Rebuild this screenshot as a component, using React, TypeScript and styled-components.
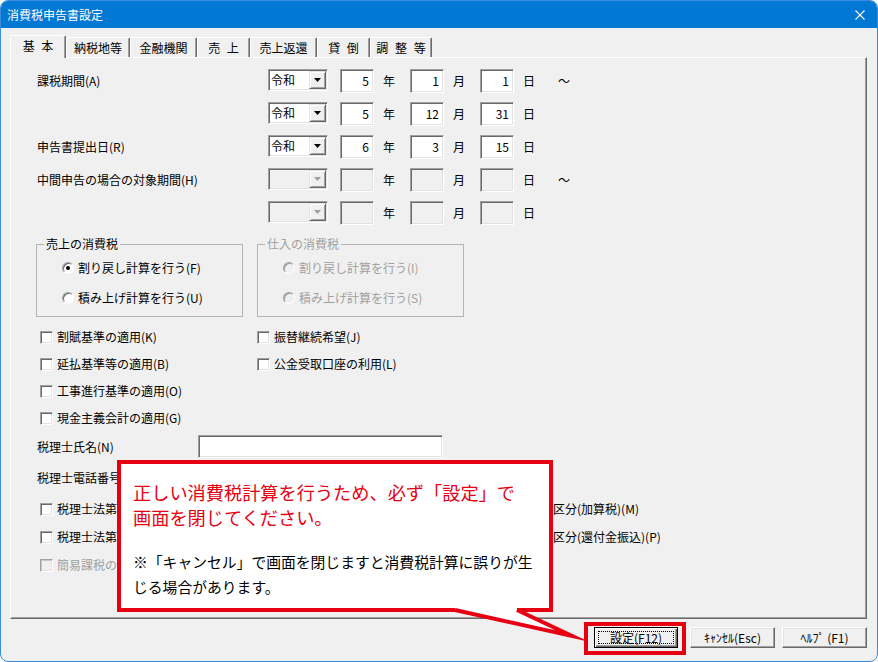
import React from "react";
import styled, { createGlobalStyle } from "styled-components";

const GlobalStyle = createGlobalStyle`
  html, body { margin: 0; padding: 0; background: #ffffff; }
  body {
    font-family: "Noto Sans CJK JP", "Noto Sans", sans-serif;
    font-size: 12px;
    color: #000;
  }
  * { box-sizing: border-box; }
`;

const RED = "#e60012";
const DIS = "#a0a0a0";

const Window = styled.div`
  position: relative;
  width: 878px;
  height: 662px;
  border: 1px solid #3a8ddb;
  border-radius: 8px;
  overflow: hidden;
  background: #f0f0f0;
  display: flex;
  flex-direction: column;
`;

const TitleBar = styled.div`
  height: 27px;
  flex: none;
  background: #0078d4;
  color: #fff;
  display: flex;
  align-items: center;
  justify-content: space-between;
  padding: 0 12px 0 6px;
  font-size: 12px;
  line-height: 16px;
`;

const Body = styled.div`
  flex: 1;
  padding: 7px 10px 0 9px;
  display: flex;
  flex-direction: column;
`;

const TabStrip = styled.div`
  position: relative;
  z-index: 1;
  height: 22px;
  display: flex;
  align-items: flex-end;
`;

const Tab = styled.div<{ $w: number; $active?: boolean }>`
  width: ${(p) => p.$w}px;
  height: ${(p) => (p.$active ? 23 : 20)}px;
  margin-bottom: ${(p) => (p.$active ? -1 : 0)}px;
  flex: none;
  display: flex;
  align-items: center;
  justify-content: center;
  padding-bottom: ${(p) => (p.$active ? 2 : 0)}px;
  background: #f0f0f0;
  border-top: 1px solid #fff;
  border-left: 1px solid #fff;
  border-right: 1px solid #696969;
  box-shadow: inset -1px 0 0 #a0a0a0;
  border-radius: 2px 2px 0 0;
  font-size: 12px;
  line-height: 16px;
  word-spacing: 4px;
  white-space: pre;
`;

const Panel = styled.div`
  height: 562px;
  flex: none;
  border-top: 1px solid #fff;
  border-left: 1px solid #fff;
  border-right: 1px solid #696969;
  border-bottom: 1px solid #696969;
  box-shadow: inset -1px -1px 0 #a0a0a0;
  padding: 11px 0 0 26px;
  display: flex;
  flex-direction: column;
`;

const DateGrid = styled.div`
  display: flex;
  flex-direction: column;
  gap: 9px;
`;

const DateRow = styled.div`
  display: flex;
  align-items: flex-start;
  height: 24px;
`;

const FieldLabel = styled.div<{ $w: number }>`
  width: ${(p) => p.$w}px;
  flex: none;
  line-height: 24px;
  white-space: nowrap;
`;

const Sunken = styled.div<{ $disabled?: boolean }>`
  flex: none;
  background: ${(p) => (p.$disabled ? "#f0f0f0" : "#fff")};
  border: 1px solid;
  border-color: #a0a0a0 #fff #fff #a0a0a0;
  box-shadow: inset 1px 1px 0 #696969, inset -1px -1px 0 #e3e3e3;
`;

const Combo = styled(Sunken)`
  width: 60px;
  height: 22px;
  margin-right: 12px;
  padding: 1px 1px 1px 2px;
  display: flex;
  align-items: center;
  justify-content: space-between;
  line-height: 16px;
`;

const DropButton = styled.div<{ $disabled?: boolean }>`
  width: 17px;
  height: 18px;
  flex: none;
  background: #f0f0f0;
  border: 1px solid;
  border-color: #e3e3e3 #696969 #696969 #e3e3e3;
  box-shadow: inset 1px 1px 0 #fff, inset -1px -1px 0 #a0a0a0;
  display: flex;
  align-items: center;
  justify-content: center;
  color: ${(p) => (p.$disabled ? DIS : "#000")};
`;

const NumBox = styled(Sunken)`
  width: 34px;
  height: 24px;
  padding-right: 4px;
  text-align: right;
  line-height: 21px;
`;

const Unit = styled.div`
  width: 12px;
  flex: none;
  margin: 0 15px 0 9px;
  line-height: 24px;
`;

const Tilde = styled.div`
  margin-left: 8px;
  line-height: 24px;
`;

const GroupRow = styled.div`
  display: flex;
  gap: 14px;
  margin: 12px 0 0 -1px;
`;

const GroupBox = styled.fieldset<{ $disabled?: boolean }>`
  width: 207px;
  margin: 0;
  padding: 0 0 10px 7px;
  border: 1px solid #b4b4b4;
  color: ${(p) => (p.$disabled ? DIS : "#000")};
`;

const GroupLegend = styled.legend`
  padding: 0 2px;
  font-size: 12px;
  line-height: 14px;
`;

const RadioList = styled.div`
  display: flex;
  flex-direction: column;
  gap: 14px;
  padding: 9px 0 0 18px;
`;

const OptionItem = styled.label<{ $disabled?: boolean }>`
  display: flex;
  align-items: center;
  gap: 4px;
  height: 16px;
  line-height: 16px;
  white-space: nowrap;
  color: ${(p) => (p.$disabled ? DIS : "#000")};
`;

const RadioMark = styled.span<{ $checked?: boolean; $disabled?: boolean }>`
  position: relative;
  width: 12px;
  height: 12px;
  flex: none;
  border-radius: 50%;
  border: 1px solid;
  border-color: #a0a0a0 #fff #fff #a0a0a0;
  background: ${(p) => (p.$disabled ? "#f0f0f0" : "#fff")};
  box-shadow: inset 1px 1px 0 ${(p) => (p.$disabled ? "#a0a0a0" : "#696969")};
  &::after {
    content: "";
    display: ${(p) => (p.$checked ? "block" : "none")};
    position: absolute;
    left: 3px;
    top: 3px;
    width: 4px;
    height: 4px;
    border-radius: 50%;
    background: #000;
  }
`;

const CheckMark = styled.span<{ $disabled?: boolean }>`
  width: 13px;
  height: 13px;
  flex: none;
  border: 1px solid;
  border-color: #a0a0a0 #fff #fff #a0a0a0;
  background: ${(p) => (p.$disabled ? "#f0f0f0" : "#fff")};
  box-shadow: inset 1px 1px 0 ${(p) => (p.$disabled ? "#c8c8c8" : "#696969")},
    inset -1px -1px 0 #e3e3e3;
`;

const CheckGrid = styled.div<{ $cols: string; $mt: number; $gap: number }>`
  display: grid;
  grid-template-columns: ${(p) => p.$cols};
  grid-auto-rows: 16px;
  row-gap: ${(p) => p.$gap}px;
  margin: ${(p) => p.$mt}px 0 0 3px;
`;

const PlainText = styled.div`
  line-height: 16px;
  white-space: nowrap;
`;

const FormRow = styled.div<{ $mt: number }>`
  display: flex;
  align-items: center;
  height: 23px;
  margin-top: ${(p) => p.$mt}px;
`;

const TextField = styled(Sunken)<{ $w: number }>`
  width: ${(p) => p.$w}px;
  height: 23px;
`;

const ButtonRow = styled.div`
  display: flex;
  justify-content: flex-end;
  align-items: center;
  margin-top: 8px;
`;

const DialogButton = styled.button<{ $w: number; $mr: number }>`
  position: relative;
  width: ${(p) => p.$w}px;
  height: 21px;
  margin: 0 ${(p) => p.$mr}px 0 0;
  padding: 0;
  background: #f0f0f0;
  border: 1px solid;
  border-color: #fff #696969 #696969 #fff;
  box-shadow: inset -1px -1px 0 #a0a0a0, inset 1px 1px 0 #e3e3e3;
  font-family: inherit;
  font-size: 12px;
  line-height: 16px;
  color: #000;
`;

const DefaultButton = styled(DialogButton)`
  border: 1px solid #000;
  box-shadow: inset 1px 1px 0 #fff, inset -1px -1px 0 #696969,
    inset -2px -2px 0 #a0a0a0;
  &::before {
    content: "";
    position: absolute;
    inset: 3px;
    border: 1px dotted #000;
  }
  &::after {
    content: "";
    position: absolute;
    top: -6px;
    bottom: -8px;
    left: -11px;
    right: -9px;
    border: 4px solid ${RED};
  }
`;

const Callout = styled.div`
  position: absolute;
  left: 116px;
  top: 459px;
  width: 436px;
  height: 152px;
  background: #fff;
  border: 4px solid ${RED};
  padding: 16px 0 0 12px;
  white-space: nowrap;
`;

const CalloutHead = styled.div`
  color: ${RED};
  font-size: 18.2px;
  line-height: 25px;
`;

const CalloutNote = styled.div`
  margin-top: 19px;
  color: #000;
  font-size: 14.8px;
  line-height: 25px;
`;

const Tail = styled.svg`
  position: absolute;
  left: 439px;
  top: 599px;
  overflow: visible;
`;

const Arrow = () => (
  <svg width="7" height="4" viewBox="0 0 7 4">
    <path d="M0 0h7L3.5 4z" fill="currentColor" />
  </svg>
);

type DateSpec = {
  label: string;
  era?: string;
  y?: string;
  m?: string;
  d?: string;
  tilde?: boolean;
  disabled?: boolean;
};

const dateRows: DateSpec[] = [
  { label: "課税期間(A)", era: "令和", y: "5", m: "1", d: "1", tilde: true },
  { label: "", era: "令和", y: "5", m: "12", d: "31" },
  { label: "申告書提出日(R)", era: "令和", y: "6", m: "3", d: "15" },
  { label: "中間申告の場合の対象期間(H)", disabled: true, tilde: true },
  { label: "", disabled: true },
];

const tabs: { t: string; w: number }[] = [
  { t: "基 本", w: 56 },
  { t: "納税地等", w: 64 },
  { t: "金融機関", w: 67 },
  { t: "売 上", w: 53 },
  { t: "売上返還", w: 67 },
  { t: "貸 倒", w: 53 },
  { t: "調 整 等", w: 62 },
];

const Check = ({ text, disabled }: { text: string; disabled?: boolean }) => (
  <OptionItem $disabled={disabled}>
    <CheckMark $disabled={disabled} />
    {text}
  </OptionItem>
);

const Radio = ({
  text,
  checked,
  disabled,
}: {
  text: string;
  checked?: boolean;
  disabled?: boolean;
}) => (
  <OptionItem $disabled={disabled}>
    <RadioMark $checked={checked} $disabled={disabled} />
    {text}
  </OptionItem>
);

export default function App() {
  return (
    <>
      <GlobalStyle />
      <Window>
        <TitleBar>
          <span>消費税申告書設定</span>
          <svg width="10" height="10" viewBox="0 0 10 10">
            <path d="M0.5 0.5L9.5 9.5M9.5 0.5L0.5 9.5" stroke="#fff" strokeWidth="1.1" />
          </svg>
        </TitleBar>
        <Body>
          <TabStrip>
            {tabs.map((t, i) => (
              <Tab key={t.t} $w={t.w} $active={i === 0}>
                {t.t}
              </Tab>
            ))}
          </TabStrip>
          <Panel>
            <DateGrid>
              {dateRows.map((r, i) => (
                <DateRow key={i}>
                  <FieldLabel $w={231}>{r.label}</FieldLabel>
                  <Combo $disabled={r.disabled}>
                    <span>{r.era ?? ""}</span>
                    <DropButton $disabled={r.disabled}>
                      <Arrow />
                    </DropButton>
                  </Combo>
                  <NumBox $disabled={r.disabled}>{r.y ?? ""}</NumBox>
                  <Unit>年</Unit>
                  <NumBox $disabled={r.disabled}>{r.m ?? ""}</NumBox>
                  <Unit>月</Unit>
                  <NumBox $disabled={r.disabled}>{r.d ?? ""}</NumBox>
                  <Unit>日</Unit>
                  {r.tilde && <Tilde>～</Tilde>}
                </DateRow>
              ))}
            </DateGrid>

            <GroupRow>
              <GroupBox>
                <GroupLegend>売上の消費税</GroupLegend>
                <RadioList>
                  <Radio text="割り戻し計算を行う(F)" checked />
                  <Radio text="積み上げ計算を行う(U)" />
                </RadioList>
              </GroupBox>
              <GroupBox $disabled>
                <GroupLegend>仕入の消費税</GroupLegend>
                <RadioList>
                  <Radio text="割り戻し計算を行う(I)" disabled />
                  <Radio text="積み上げ計算を行う(S)" disabled />
                </RadioList>
              </GroupBox>
            </GroupRow>

            <CheckGrid $cols="217px 1fr" $mt={12} $gap={11}>
              <Check text="割賦基準の適用(K)" />
              <Check text="振替継続希望(J)" />
              <Check text="延払基準等の適用(B)" />
              <Check text="公金受取口座の利用(L)" />
              <Check text="工事進行基準の適用(O)" />
              <span />
              <Check text="現金主義会計の適用(G)" />
            </CheckGrid>

            <FormRow $mt={9}>
              <FieldLabel $w={161}>税理士氏名(N)</FieldLabel>
              <TextField $w={245} />
            </FormRow>
            <FormRow $mt={8}>
              <FieldLabel $w={161}>税理士電話番号</FieldLabel>
              <TextField $w={160} />
            </FormRow>

            <CheckGrid $cols="513px 1fr" $mt={12} $gap={12}>
              <Check text="税理士法第" />
              <PlainText>区分(加算税)(M)</PlainText>
              <Check text="税理士法第" />
              <PlainText>区分(還付金振込)(P)</PlainText>
              <Check text="簡易課税の" disabled />
            </CheckGrid>
          </Panel>

          <ButtonRow>
            <DefaultButton $w={84} $mr={12}>設定(F12)</DefaultButton>
            <DialogButton $w={85} $mr={7}>ｷｬﾝｾﾙ(Esc)</DialogButton>
            <DialogButton $w={85} $mr={0}>ﾍﾙﾌﾟ (F1)</DialogButton>
          </ButtonRow>
        </Body>

        <Callout>
          <CalloutHead>
            正しい消費税計算を行うため、必ず「設定」で
            <br />
            画面を閉じてください。
          </CalloutHead>
          <CalloutNote>
            ※「キャンセル」で画面を閉じますと消費税計算に誤りが生
            <br />
            じる場合があります。
          </CalloutNote>
        </Callout>
        <Tail width="140" height="42" viewBox="0 0 140 42">
          <polygon points="15,5 15,10 132,36 77,10 77,5" fill="#fff" />
          <polyline
            points="15,10 132,36 77,10"
            fill="none"
            stroke={RED}
            strokeWidth="4"
            strokeMiterlimit="12"
          />
        </Tail>
      </Window>
    </>
  );
}
